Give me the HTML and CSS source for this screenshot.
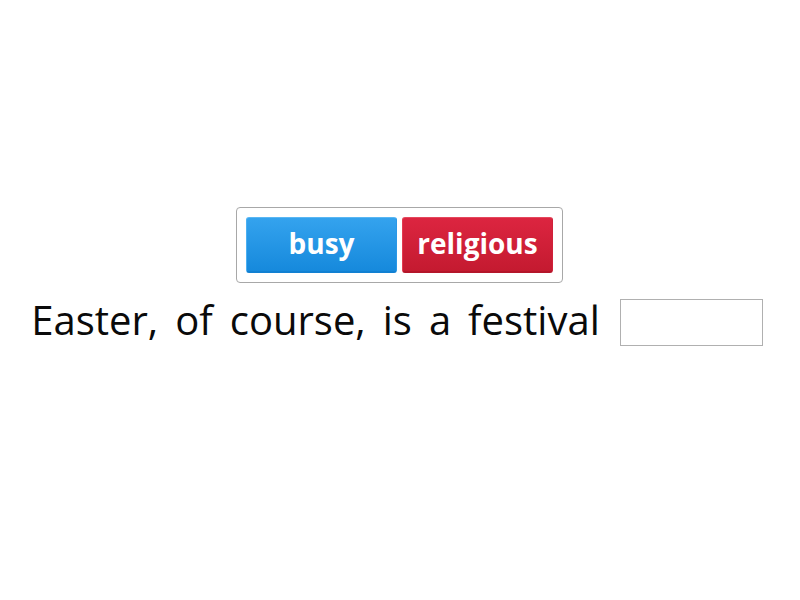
FILE: index.html
```html
<!DOCTYPE html>
<html>
<head>
<meta charset="utf-8">
<link rel="stylesheet" href="styles.css">
</head>
<body>
<main class="stage">
  <div class="bank">
    <div class="tile tile-blue">busy</div>
    <div class="tile tile-red">religious</div>
  </div>
  <div class="sentence">
    <span class="word">Easter,</span>
    <span class="word">of</span>
    <span class="word">course,</span>
    <span class="word">is</span>
    <span class="word">a</span>
    <span class="word">festival</span>
    <span class="blank"></span>
  </div>
</main>
</body>
</html>
```
FILE: styles.css
```css
html, body {
  margin: 0;
  padding: 0;
  background: #ffffff;
}
body {
  font-family: "Open Sans", "Liberation Sans", sans-serif;
  width: 800px;
  height: 600px;
  overflow: hidden;
}
.stage {
  display: flex;
  flex-direction: column;
  align-items: center;
  padding-top: 207px;
}
.bank {
  display: flex;
  gap: 5px;
  padding: 9px;
  border: 1px solid #a8a8a8;
  border-radius: 4px;
  margin-right: 1px;
}
.tile {
  width: 151px;
  height: 56px;
  box-sizing: border-box;
  border-radius: 3px;
  color: #ffffff;
  font-weight: 700;
  font-size: 28px;
  display: flex;
  align-items: center;
  justify-content: center;
  padding-bottom: 4px;
}
.tile-blue {
  background: linear-gradient(#34a3ee, #1689dc);
  border-top: 1px solid #5ab7f3;
  border-left: 1px solid #4cb0f2;
  border-right: 1px solid #2a98e6;
  border-bottom: 2px solid #1180d2;
}
.tile-red {
  background: linear-gradient(#dc2540, #c41a30);
  border-top: 1px solid #e5485d;
  border-left: 1px solid #e33a50;
  border-right: 1px solid #d0213a;
  border-bottom: 2px solid #b4162a;
}
.sentence {
  display: flex;
  align-items: flex-start;
  margin-top: 16px;
  margin-right: 6px;
  color: #0a0a0a;
  font-size: 40px;
}
.word {
  line-height: 42px;
  margin-right: 17px;
}
.word:nth-child(6) {
  margin-right: 20px;
}
.blank {
  width: 143px;
  height: 47px;
  box-sizing: border-box;
  border: 1px solid #b0b0b0;
}
```
